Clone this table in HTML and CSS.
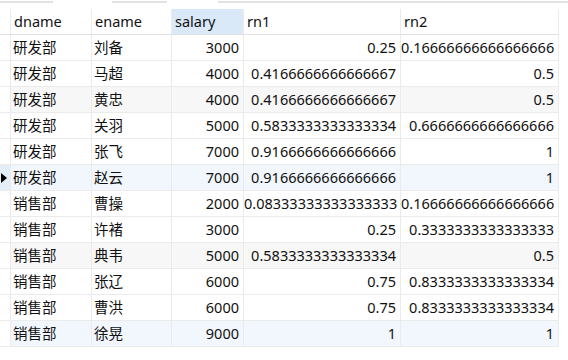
FILE: index.html
```html
<!DOCTYPE html>
<html lang="zh-CN">
<head>
    <meta charset="UTF-8">
    <title>查询结果</title>
    <link rel="stylesheet" href="styles.css">
</head>
<body>
    <div class="top-strip">
        <span class="seg seg-a"></span>
        <span class="seg seg-b"></span>
        <span class="seg seg-c"></span>
    </div>
    <div class="grid">
        <div class="row head">
            <div class="cell mark"></div>
            <div class="cell">dname</div>
            <div class="cell">ename</div>
            <div class="cell sorted">salary</div>
            <div class="cell">rn1</div>
            <div class="cell">rn2</div>
        </div>
        <div class="row">
            <div class="cell mark"></div>
            <div class="cell">研发部</div><div class="cell">刘备</div>
            <div class="cell num">3000</div><div class="cell num">0.25</div><div class="cell num">0.16666666666666666</div>
        </div>
        <div class="row">
            <div class="cell mark"></div>
            <div class="cell">研发部</div><div class="cell">马超</div>
            <div class="cell num">4000</div><div class="cell num">0.4166666666666667</div><div class="cell num">0.5</div>
        </div>
        <div class="row shade">
            <div class="cell mark"></div>
            <div class="cell">研发部</div><div class="cell">黄忠</div>
            <div class="cell num">4000</div><div class="cell num">0.4166666666666667</div><div class="cell num">0.5</div>
        </div>
        <div class="row">
            <div class="cell mark"></div>
            <div class="cell">研发部</div><div class="cell">关羽</div>
            <div class="cell num">5000</div><div class="cell num">0.5833333333333334</div><div class="cell num">0.6666666666666666</div>
        </div>
        <div class="row">
            <div class="cell mark"></div>
            <div class="cell">研发部</div><div class="cell">张飞</div>
            <div class="cell num">7000</div><div class="cell num">0.9166666666666666</div><div class="cell num">1</div>
        </div>
        <div class="row current">
            <div class="cell mark">
                <svg class="arrow" width="6" height="10" viewBox="0 0 6 10"><polygon points="0,0 6,5 0,10" fill="#000"/></svg>
            </div>
            <div class="cell">研发部</div><div class="cell">赵云</div>
            <div class="cell num">7000</div><div class="cell num">0.9166666666666666</div><div class="cell num">1</div>
        </div>
        <div class="row">
            <div class="cell mark"></div>
            <div class="cell">销售部</div><div class="cell">曹操</div>
            <div class="cell num">2000</div><div class="cell num">0.08333333333333333</div><div class="cell num">0.16666666666666666</div>
        </div>
        <div class="row">
            <div class="cell mark"></div>
            <div class="cell">销售部</div><div class="cell">许褚</div>
            <div class="cell num">3000</div><div class="cell num">0.25</div><div class="cell num">0.3333333333333333</div>
        </div>
        <div class="row shade">
            <div class="cell mark"></div>
            <div class="cell">销售部</div><div class="cell">典韦</div>
            <div class="cell num">5000</div><div class="cell num">0.5833333333333334</div><div class="cell num">0.5</div>
        </div>
        <div class="row">
            <div class="cell mark"></div>
            <div class="cell">销售部</div><div class="cell">张辽</div>
            <div class="cell num">6000</div><div class="cell num">0.75</div><div class="cell num">0.8333333333333334</div>
        </div>
        <div class="row">
            <div class="cell mark"></div>
            <div class="cell">销售部</div><div class="cell">曹洪</div>
            <div class="cell num">6000</div><div class="cell num">0.75</div><div class="cell num">0.8333333333333334</div>
        </div>
        <div class="row hover">
            <div class="cell mark"></div>
            <div class="cell">销售部</div><div class="cell">徐晃</div>
            <div class="cell num">9000</div><div class="cell num">1</div><div class="cell num">1</div>
        </div>
    </div>
</body>
</html>
```

FILE: styles.css
```css
body {
    margin: 0;
    background: #fff;
    color: #111;
    font-family: "Noto Sans", "Noto Sans CJK SC", sans-serif;
    font-size: 14.5px;
}
.top-strip {
    display: flex;
    height: 9px;
}
.seg {
    height: 2px;
    margin-top: 1px;
    background: #e2e2e2;
}
.seg-a { width: 53px; margin-right: 59px; }
.seg-b { width: 55px; margin-right: 51px; }
.seg-c { flex: 1; }
.grid {
    width: 559px;
}
.row {
    display: grid;
    grid-template-columns: 11px 81px 80px 72px 157px 158px;
    height: 26px;
}
.cell {
    box-sizing: border-box;
    border-right: 1px solid #ebebeb;
    border-bottom: 1px solid #ebebeb;
    padding: 0 4px 0 2px;
    line-height: 25px;
    white-space: nowrap;
    overflow: hidden;
}
.mark {
    padding: 0;
    display: flex;
    align-items: center;
    background: #fff;
}
.arrow {
    margin-left: 1px;
}
.num {
    text-align: right;
    padding: 0 4px 0 0;
}
.head .cell {
    border-bottom-color: #e0e0e0;
    padding-left: 3px;
}
.head .sorted {
    background: #d9e9f8;
}
.shade .cell {
    background: #f7f7f7;
}
.current .cell,
.hover .cell {
    background: #f2f7fd;
}
.current .mark {
    background: #e3eef9;
}
.shade .mark,
.hover .mark {
    background: #fff;
}
```
